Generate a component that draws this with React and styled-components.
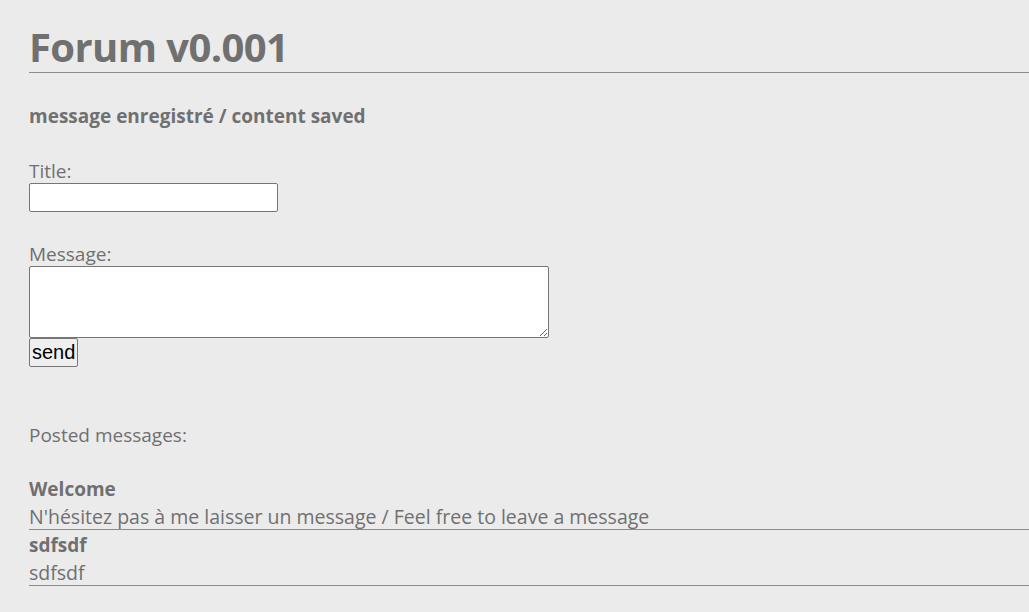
import styled, { createGlobalStyle } from "styled-components";

const GlobalStyle = createGlobalStyle`
    html, body {
        margin: 0;
        padding: 0;
        background-color: #ebebeb;
    }
    body {
        font-family: "Open Sans", "Noto Sans", sans-serif;
        color: #707070;
    }
`;

const messages = [
    { title: 'Welcome', body: "N'hésitez pas à me laisser un message / Feel free to leave a message" },
    { title: 'sdfsdf', body: 'sdfsdf' },
];

const App = () => {
    return (
        <>
            <GlobalStyle />
            <Page>
                <Title>Forum v0.001</Title>
                <Notice>message enregistré / content saved</Notice>

                <Form onSubmit={(e) => e.preventDefault()}>
                    <Label htmlFor="title">Title:</Label>
                    <TextInput id="title" type="text" />
                    <Label htmlFor="message" $gap>Message:</Label>
                    <TextArea id="message" />
                    <SendButton type="submit">send</SendButton>
                </Form>

                <SectionLabel>Posted messages:</SectionLabel>

                <MessageList>
                    {
                        messages.map((msg, index) => (
                            <MessageItem key={index}>
                                <MessageTitle>{msg.title}</MessageTitle>
                                <MessageBody>{msg.body}</MessageBody>
                            </MessageItem>
                        ))
                    }
                </MessageList>
            </Page>
        </>
    );
};

const Page = styled.div`
    padding: 22px 0 20px 29px;
`;

const Title = styled.h1`
    margin: 0;
    font-size: 40px;
    font-weight: 700;
    letter-spacing: -0.6px;
    line-height: 50px;
    color: #707070;
    border-bottom: 1px solid #8c8c8c;
`;

const Notice = styled.p`
    margin: 29px 0 0;
    font-size: 19px;
    font-weight: 700;
    line-height: 28px;
`;

const Form = styled.form`
    display: flex;
    flex-direction: column;
    align-items: flex-start;
    margin-top: 29px;
`;

const Label = styled.label`
    font-size: 19px;
    line-height: 24px;
    margin-top: ${(props) => props.$gap ? '30px' : '0'};
`;

const TextInput = styled.input`
    box-sizing: border-box;
    width: 249px;
    height: 29px;
    margin: 0;
    border: 1px solid #767676;
    border-radius: 2px;
    background: #fff;
`;

const TextArea = styled.textarea`
    box-sizing: border-box;
    width: 520px;
    height: 72px;
    margin: 0;
    border: 1px solid #767676;
    border-radius: 2px;
    background: #fff;
`;

const SendButton = styled.button`
    box-sizing: border-box;
    height: 29px;
    padding: 0 2px;
    font-family: "Liberation Sans", Arial, sans-serif;
    font-size: 20px;
    color: #000;
    background-color: #efefef;
    border: 1px solid #767676;
    border-radius: 2px;
`;

const SectionLabel = styled.p`
    margin: 54px 0 0;
    font-size: 19px;
    line-height: 28px;
`;

const MessageList = styled.div`
    margin-top: 25px;
`;

const MessageItem = styled.div`
    border-bottom: 1px solid #8c8c8c;
`;

const MessageTitle = styled.div`
    font-size: 19px;
    font-weight: 700;
    line-height: 30px;
`;

const MessageBody = styled.div`
    font-size: 19.5px;
    line-height: 25px;
`;

export default App;
